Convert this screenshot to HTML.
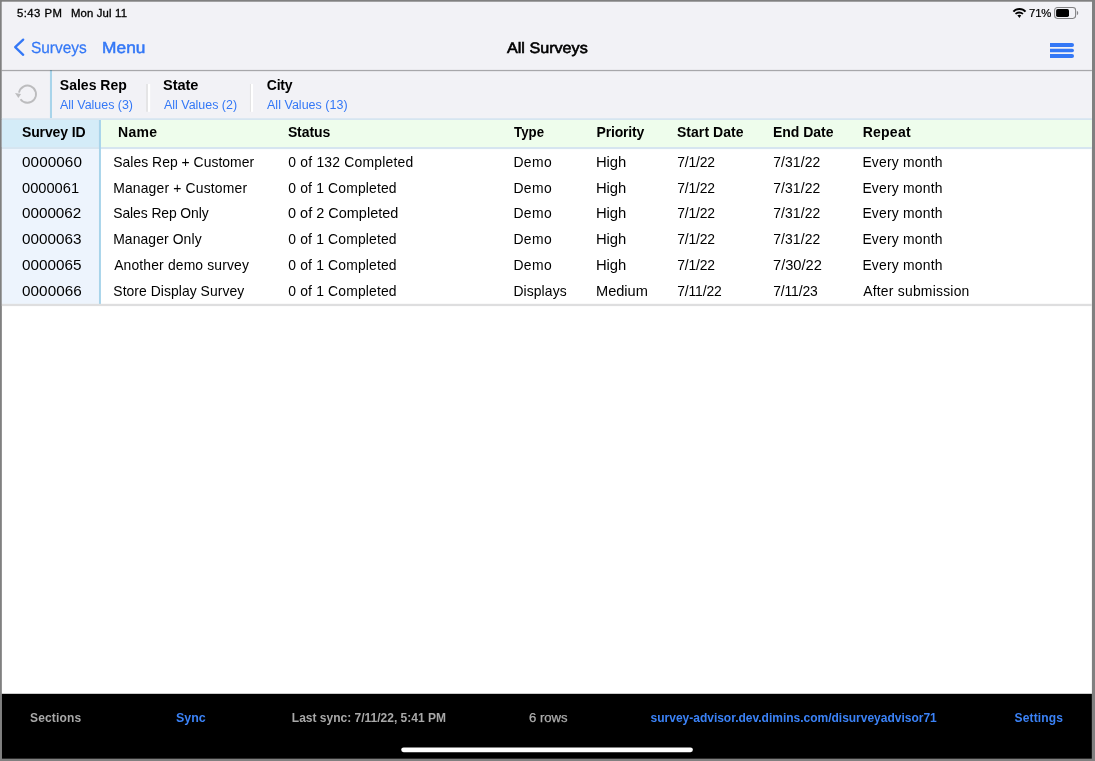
<!DOCTYPE html>
<html><head><meta charset="utf-8"><title>All Surveys</title>
<style>
html,body{margin:0;padding:0;}
body{width:1095px;height:761px;overflow:hidden;position:relative;background:#808080;font-family:"Liberation Sans",sans-serif;}
.a{position:absolute;}
.t{position:absolute;transform-origin:0 0;white-space:nowrap;line-height:1;font-family:"Liberation Sans",sans-serif;}
.L{position:absolute;left:0;top:0;width:1095px;height:761px;will-change:transform;}
</style></head>
<body>
<svg class="a" style="left:0;top:0;" width="1095" height="761" viewBox="0 0 1095 761">
<rect x="1.85" y="1.85" width="1090.05" height="756.95" fill="#fff"/>
<rect x="1.85" y="1.85" width="1090.05" height="117" fill="#f2f2f6"/>
<rect x="49.95" y="70" width="2.05" height="48.3" fill="#a8d4ea"/>
<rect x="1.85" y="69.9" width="1090.05" height="1.25" fill="#000" fill-opacity="0.31"/>
<rect x="146" y="84" width="2" height="27.8" fill="#e5e5e6"/><rect x="148" y="84" width="2.15" height="27.8" fill="#fff"/>
<rect x="249.9" y="84" width="1.1" height="27.8" fill="#e4e4e5"/><rect x="251" y="84" width="2.05" height="27.8" fill="#fff"/>
<!-- header row -->
<rect x="1.85" y="118.2" width="1090.05" height="30.9" fill="#d6e5f0"/>
<rect x="1.85" y="120" width="97" height="27" fill="#d4ecf8"/>
<rect x="101" y="120" width="990.9" height="27" fill="#eefdec"/>
<!-- id column -->
<rect x="1.85" y="149.1" width="97" height="154.8" fill="#edf4fd"/>
<rect x="98.95" y="120" width="2" height="184" fill="#a8d4ea"/>
<rect x="1.85" y="303.8" width="1090.05" height="2.3" fill="#dededf"/>
<!-- footer -->
<rect x="1.85" y="693.8" width="1090.05" height="65" fill="#000"/>
<rect x="401.2" y="747.4" width="291.7" height="4.8" rx="2.4" ry="2.4" fill="#fff"/>
<!-- back chevron -->
<path d="M23.2 39.6 L15.2 47.2 L23.2 54.8" fill="none" stroke="#3478f6" stroke-width="2.3" stroke-linecap="round" stroke-linejoin="round"/>
<!-- refresh -->
<path d="M20.49 99.25 A8.6 8.6 0 1 0 18.98 92.7" fill="none" stroke="#bcbcbe" stroke-width="1.85"/>
<path d="M15.0 93.0 L21.0 94.1 L18.4 98.0 Z" fill="#bcbcbe"/>
<!-- wifi -->
<g fill="none" stroke="#000" stroke-linecap="butt">
<path d="M1013.4 11.7 A7.9 7.9 0 0 1 1025.5 11.7" stroke-width="2"/>
<path d="M1015.5 13.9 A6.2 6.2 0 0 1 1023 13.9" stroke-width="1.8"/>
</g>
<path d="M1017.3 15.3 Q1019.4 14.4 1021.2 15.3 L1019.5 18 Z" fill="#000"/>
<!-- battery -->
<rect x="1054.6" y="7.5" width="21" height="10.9" rx="2.8" ry="2.8" fill="none" stroke="#808082" stroke-width="1.05"/>
<rect x="1056.1" y="9" width="12.9" height="7.9" rx="1.7" ry="1.7" fill="#000"/>
<path d="M1076.9 11.1 A1.35 1.9 0 0 1 1076.9 14.9 Z" fill="#858587"/>
<!-- hamburger -->
<g fill="#3478f6">
<path d="M1050 43 H1072 A2 2 0 0 1 1072 47 H1050 Z"/>
<path d="M1050 48.7 H1072.2 A1.8 1.8 0 0 1 1072.2 52.3 H1050 Z"/>
<path d="M1050 54 H1072 A2 2 0 0 1 1072 58 H1050 Z"/>
</g>
</svg>
<div class="L">
<span class="t" style="left:17.28px;top:9.01px;font-size:10.3px;color:#000;letter-spacing:0.41px;transform:scaleX(1.1000);-webkit-text-stroke:0.3px #000;">5:43 PM</span>
<span class="t" style="left:70.55px;top:9.01px;font-size:10.3px;color:#000;letter-spacing:0.14px;transform:scaleX(1.1000);-webkit-text-stroke:0.3px #000;">Mon Jul 11</span>
<span class="t" style="left:1028.83px;top:9.01px;font-size:10.3px;color:#000;letter-spacing:-0.11px;transform:scaleX(1.1000);-webkit-text-stroke:0.2px #000;">71%</span>
<span class="t" style="left:30.80px;top:40.01px;font-size:16.1px;color:#3478f6;letter-spacing:0.01px;transform:scaleX(0.9577);text-rendering:geometricPrecision;-webkit-text-stroke:0.25px #3478f6;">Surveys</span>
<span class="t" style="left:102.26px;top:40.01px;font-size:16.1px;color:#3478f6;letter-spacing:0.04px;transform:scaleX(1.0753);text-rendering:geometricPrecision;-webkit-text-stroke:0.5px #3478f6;">Menu</span>
<span class="t" style="left:506.96px;top:41.01px;font-size:15.2px;color:#000;letter-spacing:-0.01px;transform:scaleX(1.0642);text-rendering:geometricPrecision;-webkit-text-stroke:0.6px #000;">All Surveys</span>
<span class="t" style="left:59.83px;top:78.01px;font-size:14.0px;font-weight:700;color:#000;letter-spacing:0.01px;">Sales Rep</span>
<span class="t" style="left:59.72px;top:99.01px;font-size:12px;color:#3478f6;letter-spacing:-0.02px;transform:scaleX(1.0401);">All Values (3)</span>
<span class="t" style="left:163.07px;top:78.01px;font-size:14.0px;font-weight:700;color:#000;letter-spacing:-0.07px;transform:scaleX(1.0421);">State</span>
<span class="t" style="left:163.70px;top:99.01px;font-size:12px;color:#3478f6;letter-spacing:-0.02px;transform:scaleX(1.0403);">All Values (2)</span>
<span class="t" style="left:266.71px;top:78.01px;font-size:14.0px;font-weight:700;color:#000;letter-spacing:-0.18px;">City</span>
<span class="t" style="left:267.29px;top:99.01px;font-size:12px;color:#3478f6;letter-spacing:0.02px;transform:scaleX(1.0417);">All Values (13)</span>
<span class="t" style="left:21.96px;top:125.01px;font-size:14.0px;font-weight:700;color:#000;letter-spacing:-0.13px;">Survey ID</span>
<span class="t" style="left:118.02px;top:125.01px;font-size:14.0px;font-weight:700;color:#000;letter-spacing:0.30px;">Name</span>
<span class="t" style="left:287.89px;top:125.01px;font-size:14.0px;font-weight:700;color:#000;letter-spacing:-0.09px;">Status</span>
<span class="t" style="left:514.28px;top:125.01px;font-size:14.0px;font-weight:700;color:#000;letter-spacing:0.05px;transform:scaleX(0.9436);">Type</span>
<span class="t" style="left:596.52px;top:125.01px;font-size:14.0px;font-weight:700;color:#000;letter-spacing:-0.17px;">Priority</span>
<span class="t" style="left:676.88px;top:125.01px;font-size:14.0px;font-weight:700;color:#000;letter-spacing:0.07px;">Start Date</span>
<span class="t" style="left:773.02px;top:125.01px;font-size:14.0px;font-weight:700;color:#000;letter-spacing:-0.02px;">End Date</span>
<span class="t" style="left:862.64px;top:125.01px;font-size:14.0px;font-weight:700;color:#000;letter-spacing:0.26px;">Repeat</span>
<span class="t" style="left:22.35px;top:156.01px;font-size:13.9px;color:#000;letter-spacing:0.06px;transform:scaleX(1.1000);">0000060</span>
<span class="t" style="left:113.32px;top:156.01px;font-size:13.9px;color:#000;letter-spacing:0.03px;">Sales Rep + Customer</span>
<span class="t" style="left:288.25px;top:156.01px;font-size:13.9px;color:#000;letter-spacing:0.22px;">0 of 132 Completed</span>
<span class="t" style="left:513.38px;top:156.01px;font-size:13.9px;color:#000;letter-spacing:0.45px;">Demo</span>
<span class="t" style="left:596.42px;top:156.01px;font-size:13.9px;color:#000;letter-spacing:-0.08px;transform:scaleX(1.0661);">High</span>
<span class="t" style="left:677.24px;top:156.01px;font-size:13.9px;color:#000;letter-spacing:-0.16px;">7/1/22</span>
<span class="t" style="left:773.24px;top:156.01px;font-size:13.9px;color:#000;letter-spacing:0.11px;">7/31/22</span>
<span class="t" style="left:862.38px;top:156.01px;font-size:13.9px;color:#000;letter-spacing:0.22px;">Every month</span>
<span class="t" style="left:21.93px;top:182.01px;font-size:13.9px;color:#000;letter-spacing:0.00px;transform:scaleX(1.0551);">0000061</span>
<span class="t" style="left:113.14px;top:182.01px;font-size:13.9px;color:#000;letter-spacing:0.18px;">Manager + Customer</span>
<span class="t" style="left:288.25px;top:182.01px;font-size:13.9px;color:#000;letter-spacing:0.17px;">0 of 1 Completed</span>
<span class="t" style="left:513.38px;top:182.01px;font-size:13.9px;color:#000;letter-spacing:0.45px;">Demo</span>
<span class="t" style="left:596.42px;top:182.01px;font-size:13.9px;color:#000;letter-spacing:-0.08px;transform:scaleX(1.0661);">High</span>
<span class="t" style="left:677.24px;top:182.01px;font-size:13.9px;color:#000;letter-spacing:-0.16px;">7/1/22</span>
<span class="t" style="left:773.24px;top:182.01px;font-size:13.9px;color:#000;letter-spacing:0.11px;">7/31/22</span>
<span class="t" style="left:862.38px;top:182.01px;font-size:13.9px;color:#000;letter-spacing:0.22px;">Every month</span>
<span class="t" style="left:22.30px;top:207.01px;font-size:13.9px;color:#000;letter-spacing:-0.02px;transform:scaleX(1.0990);">0000062</span>
<span class="t" style="left:113.32px;top:207.01px;font-size:13.9px;color:#000;letter-spacing:-0.09px;">Sales Rep Only</span>
<span class="t" style="left:288.00px;top:207.01px;font-size:13.9px;color:#000;letter-spacing:0.01px;transform:scaleX(1.0414);">0 of 2 Completed</span>
<span class="t" style="left:513.38px;top:207.01px;font-size:13.9px;color:#000;letter-spacing:0.45px;">Demo</span>
<span class="t" style="left:596.42px;top:207.01px;font-size:13.9px;color:#000;letter-spacing:-0.08px;transform:scaleX(1.0661);">High</span>
<span class="t" style="left:677.24px;top:207.01px;font-size:13.9px;color:#000;letter-spacing:-0.16px;">7/1/22</span>
<span class="t" style="left:773.24px;top:207.01px;font-size:13.9px;color:#000;letter-spacing:0.11px;">7/31/22</span>
<span class="t" style="left:862.38px;top:207.01px;font-size:13.9px;color:#000;letter-spacing:0.22px;">Every month</span>
<span class="t" style="left:22.35px;top:233.01px;font-size:13.9px;color:#000;transform:scaleX(1.1000);">0000063</span>
<span class="t" style="left:113.14px;top:233.01px;font-size:13.9px;color:#000;letter-spacing:0.11px;">Manager Only</span>
<span class="t" style="left:288.25px;top:233.01px;font-size:13.9px;color:#000;letter-spacing:0.17px;">0 of 1 Completed</span>
<span class="t" style="left:513.38px;top:233.01px;font-size:13.9px;color:#000;letter-spacing:0.45px;">Demo</span>
<span class="t" style="left:596.42px;top:233.01px;font-size:13.9px;color:#000;letter-spacing:-0.08px;transform:scaleX(1.0661);">High</span>
<span class="t" style="left:677.24px;top:233.01px;font-size:13.9px;color:#000;letter-spacing:-0.16px;">7/1/22</span>
<span class="t" style="left:773.24px;top:233.01px;font-size:13.9px;color:#000;letter-spacing:0.11px;">7/31/22</span>
<span class="t" style="left:862.38px;top:233.01px;font-size:13.9px;color:#000;letter-spacing:0.22px;">Every month</span>
<span class="t" style="left:22.35px;top:259.01px;font-size:13.9px;color:#000;letter-spacing:-0.01px;transform:scaleX(1.0995);">0000065</span>
<span class="t" style="left:114.20px;top:259.01px;font-size:13.9px;color:#000;letter-spacing:0.15px;">Another demo survey</span>
<span class="t" style="left:288.25px;top:259.01px;font-size:13.9px;color:#000;letter-spacing:0.17px;">0 of 1 Completed</span>
<span class="t" style="left:513.38px;top:259.01px;font-size:13.9px;color:#000;letter-spacing:0.45px;">Demo</span>
<span class="t" style="left:596.42px;top:259.01px;font-size:13.9px;color:#000;letter-spacing:-0.08px;transform:scaleX(1.0661);">High</span>
<span class="t" style="left:677.24px;top:259.01px;font-size:13.9px;color:#000;letter-spacing:-0.16px;">7/1/22</span>
<span class="t" style="left:772.65px;top:259.01px;font-size:13.9px;color:#000;letter-spacing:-0.01px;transform:scaleX(1.0558);">7/30/22</span>
<span class="t" style="left:862.38px;top:259.01px;font-size:13.9px;color:#000;letter-spacing:0.22px;">Every month</span>
<span class="t" style="left:22.35px;top:285.01px;font-size:13.9px;color:#000;letter-spacing:0.04px;transform:scaleX(1.1000);">0000066</span>
<span class="t" style="left:113.32px;top:285.01px;font-size:13.9px;color:#000;letter-spacing:0.06px;">Store Display Survey</span>
<span class="t" style="left:288.25px;top:285.01px;font-size:13.9px;color:#000;letter-spacing:0.17px;">0 of 1 Completed</span>
<span class="t" style="left:513.38px;top:285.01px;font-size:13.9px;color:#000;letter-spacing:0.11px;">Displays</span>
<span class="t" style="left:596.48px;top:285.01px;font-size:13.9px;color:#000;letter-spacing:-0.02px;transform:scaleX(1.0519);">Medium</span>
<span class="t" style="left:677.24px;top:285.01px;font-size:13.9px;color:#000;letter-spacing:-0.13px;">7/11/22</span>
<span class="t" style="left:773.24px;top:285.01px;font-size:13.9px;color:#000;letter-spacing:-0.13px;">7/11/23</span>
<span class="t" style="left:863.19px;top:285.01px;font-size:13.9px;color:#000;letter-spacing:0.23px;">After submission</span>
<span class="t" style="left:30.02px;top:712.01px;font-size:12px;font-weight:700;color:#a8a8a8;letter-spacing:0.15px;">Sections</span>
<span class="t" style="left:176.04px;top:712.01px;font-size:12px;font-weight:700;color:#3b82f6;letter-spacing:-0.01px;transform:scaleX(1.0353);">Sync</span>
<span class="t" style="left:291.87px;top:712.01px;font-size:12px;font-weight:700;color:#a8a8a8;">Last sync: 7/11/22, 5:41 PM</span>
<span class="t" style="left:528.77px;top:712.01px;font-size:12px;color:#acacac;letter-spacing:-0.01px;transform:scaleX(1.0932);-webkit-text-stroke:0.25px #acacac;">6 rows</span>
<span class="t" style="left:650.61px;top:712.01px;font-size:12px;font-weight:700;color:#3b82f6;letter-spacing:-0.01px;">survey-advisor.dev.dimins.com/disurveyadvisor71</span>
<span class="t" style="left:1014.55px;top:712.01px;font-size:12px;font-weight:700;color:#3b82f6;letter-spacing:0.15px;">Settings</span>
</div>
</body></html>
